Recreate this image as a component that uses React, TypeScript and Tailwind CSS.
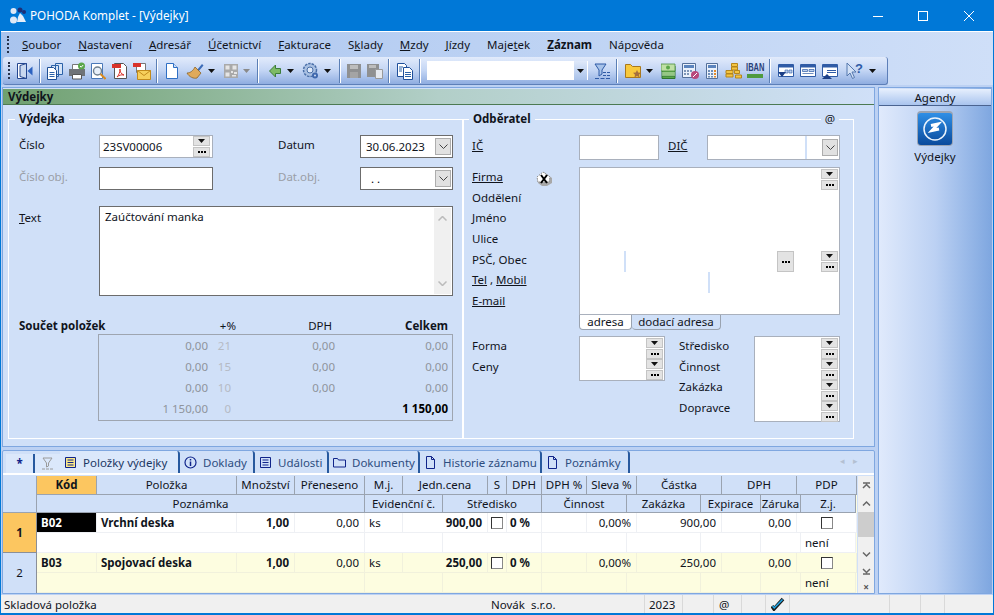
import type { ReactNode } from "react";

const font = "font-['Noto_Sans','Open_Sans',sans-serif]";

const Caret = ({ grey }: { grey?: boolean }) => (
  <svg width="7" height="4" viewBox="0 0 7 4" className="shrink-0">
    <path d="M0 0h7L3.5 4z" fill={grey ? "#8a8a8a" : "#111"} />
  </svg>
);

const Sep = ({ className = "" }: { className?: string }) => (
  <div className={`w-px h-[24px] bg-[#5b7fb5] border-r border-white shrink-0 box-content ${className}`} />
);

const Ico = ({ children, w = 18, className = "" }: { children: ReactNode; w?: number; className?: string }) => (
  <svg width={w} height="18" viewBox={`0 0 ${w} 18`} className={`shrink-0 ${className}`}>
    {children}
  </svg>
);

// toolbar drawings
const DoorIcon = () => (
  <Ico w={17}>
    <path d="M1.500 1.500h9v15h-9z" fill="#fff" stroke="#24468f" />
    <path d="M4 3.500l6.500-2v15L4 14.500z" fill="#c9d8ef" stroke="#24468f" />
    <path d="M16.500 4.500v9L11.500 9z" fill="#2c62c0" />
  </Ico>
);
const CopiesIcon = () => (
  <Ico>
    <path d="M9.500 1.500h7v11h-7zM5.500 3.500h7v11h-7z" fill="#d6e4f7" stroke="#2c62a8" />
    <path d="M1.500 5.500h6l3 3v9h-9z" fill="#fff" stroke="#1f4f96" />
    <path d="M3.500 10.500h5M3.500 12.500h5M3.500 14.500h5" stroke="#2c62a8" />
  </Ico>
);
const PrintIcon = () => (
  <Ico>
    <path d="M4.500 2.500h9v6h-9z" fill="#fff" stroke="#777" />
    <path d="M1 7h16v7H1z" fill="#6f7378" />
    <path d="M4.500 12.500h9v4.500h-9z" fill="#fff" stroke="#555" />
    <circle cx="13.500" cy="4" r="3.500" fill="#5aa74a" />
    <path d="M12 4l1.200 1.200 2-2.200" stroke="#fff" fill="none" />
  </Ico>
);
const PreviewIcon = () => (
  <Ico w={16}>
    <path d="M1.500 1.500h11v15h-11z" fill="#fff" stroke="#4a78b8" />
    <circle cx="7.500" cy="9" r="4" fill="#e8f0fa" stroke="#708090" strokeWidth="1.400" />
    <path d="M10.500 12l5 5" stroke="#d98a1e" strokeWidth="2" />
  </Ico>
);
const PdfIcon = () => (
  <Ico w={16}>
    <path d="M3.500 1.500h9l3 3v12h-12z" fill="#fff" stroke="#555" />
    <path d="M1 2h9v4H1z" fill="#d9322a" />
    <path d="M6 15c2-2 3-5 3-8 0 3 1 5 4 6-3-.5-5 .2-7 2z" fill="none" stroke="#d9322a" />
  </Ico>
);
const PdfMailIcon = () => (
  <Ico>
    <path d="M3.500 1.500h9v9h-9z" fill="#fff" stroke="#777" />
    <path d="M0 1h8v4H0z" fill="#d9322a" />
    <path d="M4.500 8.500h13v9h-13z" fill="#f6cf5c" stroke="#c28a1c" />
    <path d="M4.500 8.500l6.500 5 6.500-5" fill="none" stroke="#c28a1c" />
  </Ico>
);
const NewDocIcon = () => (
  <Ico w={12}>
    <path d="M.5 1.500h7l4 4v11H.5z" fill="#fff" stroke="#2f6fc4" />
    <path d="M7.500 1.500v4h4" fill="#cfe0f7" stroke="#2f6fc4" />
  </Ico>
);
const BroomIcon = () => (
  <Ico>
    <path d="M11 8l5-6 1.500 1.500-5 6z" fill="#3c6cb8" />
    <path d="M9 5l6 6-4 5C8 17 3 15 1 11c3 0 6-2 8-6z" fill="#e0aa5a" stroke="#8c6428" strokeWidth=".8" />
  </Ico>
);
const QrIcon = () => (
  <Ico w={14}>
    <path d="M0 2h14v14H0z" fill="#a9a9a9" />
    <path d="M1.500 3.500h4v4h-4zM8.500 3.500h4v4h-4zM1.500 10.500h4v4h-4zM7 9h2v2H7zM10 10h3v2h-3zM8 13h4v1.500H8z" fill="#e5e5e5" />
  </Ico>
);
const BackIcon = () => (
  <Ico w={12}>
    <path d="M.5 9l6-6v3.500h5v5h-5V15z" fill="#7dbb66" stroke="#3c7d3b" />
  </Ico>
);
const GearIcon = () => (
  <Ico>
    <circle cx="8" cy="8" r="6.500" fill="#a9c0e2" stroke="#4a6fa8" strokeWidth="1.500" strokeDasharray="2.500 1" />
    <circle cx="8" cy="8" r="3" fill="#dfe9f8" stroke="#4a6fa8" />
    <circle cx="13" cy="13.500" r="3" fill="#3f68ad" />
    <circle cx="13" cy="13.500" r="1" fill="#cfdcf2" />
  </Ico>
);
const SaveIcon = () => (
  <Ico w={14}>
    <path d="M0 2h14v14H0z" fill="#8f9091" />
    <path d="M3 3h8v4H3z" fill="#bdbdbd" />
    <path d="M3 10h8v6H3z" fill="#a4a4a4" />
  </Ico>
);
const SaveAllIcon = () => (
  <Ico w={16}>
    <path d="M0 2h12v13H0z" fill="#8f9091" />
    <path d="M8.500 7.500h7v9h-7z" fill="#e6e9ef" stroke="#9a9a9a" />
    <path d="M2 3h7v3H2z" fill="#bdbdbd" />
  </Ico>
);
const CopyIcon = () => (
  <Ico w={16}>
    <path d="M.5 1.500h7l2 2v11h-9z" fill="#fff" stroke="#1f4f9a" />
    <path d="M6.500 5.500h6l3 3v9h-9z" fill="#fff" stroke="#1f4f9a" />
    <path d="M8 10.500h6M8 12.500h6M8 14.500h6M2 5h4M2 7h3M2 9h3" stroke="#2c62a8" />
  </Ico>
);
const FilterIcon = () => (
  <Ico w={17}>
    <path d="M1 2h11L8 8v4l-3 2V8z" fill="#a7c3ea" stroke="#2f5ba6" />
    <path d="M1 16.500h4M6.500 16.500h4M12 16.500h4M9 13.500h3M13 13.500h3M9 10.500h3M13 10.500h3" stroke="#2f5ba6" />
  </Ico>
);
const FolderStarIcon = () => (
  <Ico w={16}>
    <path d="M.5 2.500h5l2 2h8v11H.5z" fill="#f8c93c" stroke="#a9781c" />
    <path d="M12 8l1.200 2.500 2.800.3-2 2 .6 2.700-2.600-1.400-2.600 1.400.6-2.700-2-2 2.800-.3z" fill="#a66f3c" />
  </Ico>
);
const MoneyIcon = () => (
  <Ico w={15}>
    <path d="M1 4h13v10H1zM1 14v2.500h13V14" fill="#5aa74a" stroke="#2f7430" />
    <path d="M0 2h14v7H0z" fill="#bfe0a5" stroke="#4b8f3f" strokeWidth=".8" />
    <circle cx="7" cy="5.500" r="2" fill="#5aa74a" />
    <path d="M1 11h13M1 13h13" stroke="#cfe8bf" />
  </Ico>
);
const CalcPctIcon = () => (
  <Ico w={17}>
    <path d="M.5 1.500h13v14H.5z" fill="#eaf1fb" stroke="#54709a" />
    <path d="M2 3h10v3H2z" fill="#5b84bd" />
    <path d="M2 8h2v2H2zM5 8h2v2H5zM8 8h2v2H8zM2 11h2v2H2zM5 11h2v2H5z" fill="#7d96b8" />
    <circle cx="13" cy="13" r="4" fill="#b8487c" />
    <path d="M11 15l4-4" stroke="#fff" />
  </Ico>
);
const CalcIcon = () => (
  <Ico w={12}>
    <path d="M.5 1.500h11v15H.5z" fill="#eaf1fb" stroke="#54709a" />
    <path d="M2 3h8v3H2z" fill="#5b84bd" />
    <path d="M2 8h2v2H2zM5 8h2v2H5zM2 11h2v2H2zM5 11h2v2H5zM2 14h2v1.500H2zM5 14h2v1.500H5z" fill="#6e8db8" />
    <path d="M8 8h2v2H8zM8 11h2v2H8zM8 14h2v1.500H8z" fill="#e28a2c" />
  </Ico>
);
const CoinsIcon = () => (
  <Ico w={17}>
    <path d="M6.500 1.500h6v3h-6zM6.500 5h6v3h-6zM1 8.500h7v3H1zM1 12h7v3H1zM9.500 8.500h5v3h-5zM10.500 13h6v3h-6z" fill="#f4c542" stroke="#b5851b" />
  </Ico>
);
const PanelIcon = ({ variant }: { variant: "down" | "plain" | "up" }) => (
  <Ico w={16}>
    <path d="M.5 2.500h15v12H.5z" fill="#fff" stroke="#2f5ba6" />
    <path d="M1 3h14v2.500H1z" fill="#2f5ba6" />
    {variant === "down" && (
      <>
        <path d="M7 8h3v3H7zM11 8h3v3h-3z" fill="#bcd0ee" stroke="#2f5ba6" strokeWidth=".6" />
        <path d="M0 10h8l-4 5z" fill="#1c3f86" />
      </>
    )}
    {variant === "plain" && <path d="M2.500 7.500h5v2h-5zM9 7.500h5v2H9zM2.500 11.500h11" fill="#bcd0ee" stroke="#2f5ba6" strokeWidth=".7" />}
    {variant === "up" && (
      <>
        <path d="M5 8.500h9M5 10.500h9" stroke="#2f5ba6" />
        <path d="M0 17h10l-5-5z" fill="#1c3f86" />
      </>
    )}
  </Ico>
);
const HelpIcon = () => (
  <div className="relative w-[18px] h-[18px] shrink-0">
    <svg width="12" height="18" viewBox="0 0 12 18">
      <path d="M1 1v13l3-3 2.500 5.500 2-1L6 10h4z" fill="#d3e1f6" stroke="#5578ae" />
    </svg>
    <span className="absolute left-[9px] top-0 text-[13px] leading-[14px] font-bold text-[#2f5ba6] font-['Liberation_Sans',sans-serif]">?</span>
  </div>
);

const Grip = () => <div className="w-[2px] h-[17px] border-l-2 border-dotted border-[#26324a] shrink-0" />;

const Menu = ({ children, bold }: { children: ReactNode; bold?: boolean }) => (
  <span className={bold ? "font-bold" : ""}>{children}</span>
);

const MenuBar = () => (
  <div className="h-[25px] flex items-center pl-[6px] text-[#10141c] bg-gradient-to-r from-[#a9c4ee] to-[#cfdff8]">
    <Grip />
    <div className="ml-[13px] flex gap-[17px]">
      <Menu><u>S</u>oubor</Menu>
      <Menu><u>N</u>astavení</Menu>
      <Menu><u>A</u>dresář</Menu>
      <Menu><u>Ú</u>četnictví</Menu>
      <Menu><u>F</u>akturace</Menu>
      <Menu>S<u>k</u>lady</Menu>
      <Menu><u>M</u>zdy</Menu>
      <Menu><u>J</u>ízdy</Menu>
      <Menu>Maje<u>t</u>ek</Menu>
      <Menu bold><u>Z</u>áznam</Menu>
      <Menu>Náp<u>o</u>věda</Menu>
    </div>
  </div>
);

const ToolBar = () => (
  <div className="flex bg-gradient-to-r from-[#a9c4ee] to-[#cfdff8] pl-[2px]">
    <div className="w-[885px] h-[28px] flex items-center pl-[5px] rounded-[3px] bg-gradient-to-b from-[#e2ebfb] via-[#c3d5f4] to-[#8fade0] border-r border-b border-[#5d7fb8]">
      <Grip />
      <div className="ml-[6px]"><DoorIcon /></div>
      <Sep className="ml-[6px]" />
      <div className="ml-[5px]"><CopiesIcon /></div>
      <div className="ml-[4px]"><PrintIcon /></div>
      <div className="ml-[4px]"><PreviewIcon /></div>
      <div className="ml-[5px]"><PdfIcon /></div>
      <div className="ml-[6px]"><PdfMailIcon /></div>
      <Sep className="ml-[5px]" />
      <div className="ml-[8px]"><NewDocIcon /></div>
      <div className="ml-[8px]"><BroomIcon /></div>
      <div className="ml-[4px]"><Caret /></div>
      <div className="ml-[9px]"><QrIcon /></div>
      <div className="ml-[5px]"><Caret grey /></div>
      <Sep className="ml-[7px]" />
      <div className="ml-[10px]"><BackIcon /></div>
      <div className="ml-[6px]"><Caret /></div>
      <div className="ml-[8px]"><GearIcon /></div>
      <div className="ml-[4px]"><Caret /></div>
      <Sep className="ml-[8px]" />
      <div className="ml-[6px]"><SaveIcon /></div>
      <div className="ml-[6px]"><SaveAllIcon /></div>
      <Sep className="ml-[5px]" />
      <div className="ml-[7px]"><CopyIcon /></div>
      <Sep className="ml-[6px]" />
      <div className="ml-[6px] w-[161px] h-[19px] bg-white flex justify-end border-r border-[#fff]">
        <div className="w-[13px] h-full bg-gradient-to-b from-[#dfe9fa] to-[#a9c2ea] flex items-center justify-center">
          <Caret />
        </div>
      </div>
      <div className="ml-[6px]"><FilterIcon /></div>
      <Sep className="ml-[5px]" />
      <div className="ml-[7px]"><FolderStarIcon /></div>
      <div className="ml-[5px]"><Caret /></div>
      <div className="ml-[8px]"><MoneyIcon /></div>
      <div className="ml-[6px]"><CalcPctIcon /></div>
      <div className="ml-[7px]"><CalcIcon /></div>
      <div className="ml-[7px]"><CoinsIcon /></div>
      <div className="ml-[4px] w-[18px] flex flex-col items-center">
        <span className="scale-x-75 text-[10px] font-bold text-[#2a3f78] leading-[10px] whitespace-nowrap font-['Liberation_Sans',sans-serif]">IBAN</span>
        <span className="w-[16px] h-[4px] mt-[1px] bg-[#4f9a3f]" />
      </div>
      <Sep className="ml-[5px]" />
      <div className="ml-[7px]"><PanelIcon variant="down" /></div>
      <div className="ml-[6px]"><PanelIcon variant="plain" /></div>
      <div className="ml-[6px]"><PanelIcon variant="up" /></div>
      <div className="ml-[8px]"><HelpIcon /></div>
      <div className="ml-[5px]"><Caret /></div>
    </div>
  </div>
);

// little grey buttons used by all the lookup fields
const DropBtn = ({ w = "w-[17px]" }: { w?: string }) => (
  <div className={`${w} h-[10px] bg-[#e3e3e3] border border-[#c4c4c4] flex items-center justify-center`}>
    <Caret />
  </div>
);
const DotsBtn = ({ w = "w-[17px]", h = "h-[10px]" }: { w?: string; h?: string }) => (
  <div className={`${w} ${h} bg-[#e3e3e3] border border-[#c4c4c4] flex items-center justify-center`}>
    <span className="w-[8px] border-t-2 border-dotted border-black" />
  </div>
);
const LookupBtns = () => (
  <div className="flex flex-col gap-px">
    <DropBtn />
    <DotsBtn />
  </div>
);
const ChevBtn = () => (
  <div className="w-[16px] h-[17px] bg-[#e1e1e1] border border-[#adadad] flex items-center justify-center">
    <svg width="9" height="5" viewBox="0 0 9 5"><path d="M.5.5l4 4 4-4" fill="none" stroke="#444" /></svg>
  </div>
);

const Label = ({ children, className = "" }: { children: ReactNode; className?: string }) => (
  <div className={`h-[20.67px] leading-[20px] ${className}`}>{children}</div>
);

const Vydejka = () => (
  <fieldset className="w-[455px] h-[328px] border border-white pl-[10px] pr-[8px]">
    <legend className="ml-[-4px] px-[4px] font-bold leading-[16px]">Výdejka</legend>
    <div className="flex mt-[8px] items-center h-[23px]">
      <div className="w-[80px] mt-[-3px]">Číslo</div>
      <div className="w-[114px] h-[23px] bg-white border border-[#a9b0bc] flex items-center justify-between pl-[3px] pr-[2px]">
        23SV00006
        <LookupBtns />
      </div>
      <div className="ml-[65px] w-[82px] mt-[-3px]">Datum</div>
      <div className="w-[93px] h-[23px] bg-white border border-[#6c6c6c] flex items-center justify-between pl-[5px] pr-[1px]">
        30.06.2023
        <ChevBtn />
      </div>
    </div>
    <div className="flex mt-[9px] items-center h-[23px] text-[#9a9ea6]">
      <div className="w-[80px] mt-[-3px]">Číslo obj.</div>
      <div className="w-[114px] h-[23px] bg-white border border-[#6c6c6c]" />
      <div className="ml-[65px] w-[82px] mt-[-3px]">Dat.obj.</div>
      <div className="w-[93px] h-[23px] bg-white border border-[#6c6c6c] flex items-center justify-between pl-[10px] pr-[1px] text-black">
        . .
        <ChevBtn />
      </div>
    </div>
    <div className="flex mt-[16px]">
      <div className="w-[80px] pt-[3px]"><u>T</u>ext</div>
      <div className="w-[354px] h-[90px] bg-white border border-[#6c6c6c] flex justify-between">
        <span className="pl-[5px] pt-[1px]">Zaúčtování manka</span>
        <div className="w-[17px] bg-[#f0f0f0] flex flex-col justify-between items-center py-[8px] mr-[1px] my-px">
          <svg width="9" height="5" viewBox="0 0 9 5"><path d="M.5 4.500l4-4 4 4" fill="none" stroke="#bbb" strokeWidth="1.500" /></svg>
          <svg width="9" height="5" viewBox="0 0 9 5"><path d="M.5.5l4 4 4-4" fill="none" stroke="#bbb" strokeWidth="1.500" /></svg>
        </div>
      </div>
    </div>
    <div className="flex mt-[21px] h-[17px] items-center">
      <div className="w-[99px] font-bold">Součet položek</div>
      <div className="w-[118px] text-right">+%</div>
      <div className="w-[96px] text-right">DPH</div>
      <div className="w-[116px] text-right font-bold">Celkem</div>
    </div>
    <div className="ml-[79px] w-[355px] h-[87px] border border-[#9ea5b0] text-[#8f949c] pr-[4px]">
      {[["0,00", "21", "0,00", "0,00"], ["0,00", "15", "0,00", "0,00"], ["0,00", "10", "0,00", "0,00"], ["1 150,00", "0", "", "1 150,00"]].map((r, i) => (
        <div key={i} className="flex h-[21px] items-center">
          <div className="w-[109px] text-right">{r[0]}</div>
          <div className="w-[25px] text-right pr-[2px] text-[#b5bac4]">{r[1]}</div>
          <div className="w-[102px] text-right">{r[2]}</div>
          <div className={`flex-1 text-right ${i === 3 ? "font-bold text-black" : ""}`}>{r[3]}</div>
        </div>
      ))}
    </div>
  </fieldset>
);

const HouseX = () => (
  <svg width="17" height="17" viewBox="0 0 17 17" className="ml-[33px] mt-[3px] shrink-0">
    <path d="M1 8l7-6 8 6v5l-5 3H6l-4-3z" fill="#a8a8a8" />
    <path d="M1 7l6-5 7 5-1 5H2z" fill="#fff" stroke="#8a8a8a" strokeDasharray="1.500 1" />
    <path d="M5 5l6 8M11 5l-6 8" stroke="#000" strokeWidth="2" />
  </svg>
);

const Odberatel = () => (
  <fieldset className="relative w-[391px] h-[328px] border border-white pl-[8px]">
    <legend className="ml-[-3px] px-[4px] font-bold leading-[16px]">Odběratel</legend>
    <span className="absolute right-[14px] top-[-16px] px-[4px] bg-[#d0e0f8] leading-[16px]">@</span>
    <div className="flex mt-[8px] items-center h-[25px]">
      <div className="w-[107px] mt-[-3px]"><u>IČ</u></div>
      <div className="w-[80px] h-[25px] bg-white border border-[#a9b0bc]" />
      <div className="w-[48px] ml-[9px] mt-[-3px]"><u>DIČ</u></div>
      <div className="ml-[-9px] w-[133px] h-[25px] border border-[#a9b0bc] bg-white flex justify-end items-center pr-px">
        <div className="w-[2px] h-full bg-[#d0e0f8] mr-[15px]" />
        <ChevBtn />
      </div>
    </div>
    <div className="flex mt-[7px]">
      <div className="w-[107px]">
        <div className="flex h-[20.67px] leading-[20px]"><u>Firma</u><HouseX /></div>
        <Label>Oddělení</Label>
        <Label>Jméno</Label>
        <Label>Ulice</Label>
        <Label>PSČ, Obec</Label>
        <Label><u>Tel</u> , <u>Mobil</u></Label>
        <Label><u>E-mail</u></Label>
      </div>
      <div className="relative w-[261px] h-[148px] bg-white border border-[#a9b0bc]">
        <div className="absolute right-[1px] top-[1px]"><LookupBtns /></div>
        <div className="absolute right-[1px] top-[83px]"><LookupBtns /></div>
        <div className="absolute left-[197px] top-[83px]"><DotsBtn h="h-[21px]" /></div>
        <div className="absolute left-[44px] top-[83px] w-[2px] h-[21px] bg-[#d0e0f8]" />
        <div className="absolute left-[128px] top-[104px] w-[2px] h-[21px] bg-[#d0e0f8]" />
      </div>
    </div>
    <div className="flex ml-[107px] h-[15px] leading-[14px]">
      <div className="w-[53px] bg-white border-x border-b border-[#9aa3b0] rounded-b-[4px] text-center">adresa</div>
      <div className="w-[89px] bg-[#d0e0f8] border-r border-b border-[#9aa3b0] rounded-b-[4px] text-center">dodací adresa</div>
    </div>
    <div className="flex mt-[6px]">
      <div className="w-[107px]">
        <Label>Forma</Label>
        <Label>Ceny</Label>
      </div>
      <div className="w-[86px] h-[45px] bg-white border border-[#a9b0bc] flex justify-end pr-px pt-px">
        <div className="flex flex-col"><LookupBtns /><LookupBtns /></div>
      </div>
      <div className="w-[89px] ml-[14px] mr-[-14px]">
        <Label>Středisko</Label>
        <Label>Činnost</Label>
        <Label>Zakázka</Label>
        <Label>Dopravce</Label>
      </div>
      <div className="w-[86px] h-[86px] bg-white border border-[#a9b0bc] flex justify-end pr-px pt-px">
        <div className="flex flex-col"><LookupBtns /><LookupBtns /><LookupBtns /><LookupBtns /></div>
      </div>
    </div>
  </fieldset>
);

const TabItem = ({ icon, label, active, w }: { icon: ReactNode; label: string; active?: boolean; w: string }) => (
  <div className={`${w} h-[22px] pt-px flex items-center gap-[6px] pl-[4px] border-r-2 border-[#27599e] rounded-tr-[3px] whitespace-nowrap ${active ? "bg-[#dbe8fb] text-[#1b3763]" : "text-[#2d4d80]"}`}>
    {icon}
    {label}
  </div>
);

const tabStroke = "#10248a";
const TabIcon = ({ kind }: { kind: "list" | "yellow" | "info" | "folder" | "doc" }) => (
  <svg width="13" height="13" viewBox="0 0 13 13" className="shrink-0">
    {kind === "info" && (
      <>
        <circle cx="6.500" cy="6.500" r="5.500" fill="none" stroke={tabStroke} strokeWidth="1.200" />
        <path d="M6.500 3v1.500M6.500 5.500V10" stroke={tabStroke} strokeWidth="1.500" />
      </>
    )}
    {(kind === "list" || kind === "yellow") && (
      <>
        <path d="M1.500 1.500h10v10h-10z" fill={kind === "yellow" ? "#fbe98a" : "none"} stroke={tabStroke} />
        <path d="M3.500 4h6M3.500 6.500h6M3.500 9h6" stroke={tabStroke} />
      </>
    )}
    {kind === "folder" && <path d="M.5 2.500h4l1 1.500h7v7H.5z" fill="none" stroke={tabStroke} />}
    {kind === "doc" && <path d="M2.500.5h5l3 3v9h-8zM7.500.5v3h3" fill="none" stroke={tabStroke} />}
  </svg>
);

const topCols = "grid-cols-[60px_140px_58px_70px_38px_85px_19px_35px_45px_50px_85px_75px_60px]";
const botCols = "grid-cols-[328px_78px_99px_85px_74px_60px_40px_55px]";

const Head = ({ children, active, h = "h-[19px]" }: { children?: ReactNode; active?: boolean; h?: string }) => (
  <div className={`${h} leading-[18px] text-center border-r border-b border-[#9aa3b0] whitespace-nowrap overflow-hidden ${active ? "bg-[#fcc660] font-bold" : "bg-[#d0e0f8]"}`}>
    {children}
  </div>
);

const Cell = ({ children, right, bold, bg, center, tight }: { children?: ReactNode; right?: boolean; bold?: boolean; bg: string; center?: boolean; tight?: boolean }) => (
  <div className={`h-[20px] leading-[19px] border-r border-b ${bg} ${right ? "text-right" : ""} ${bold ? "font-bold" : ""} ${center ? "flex items-center justify-center" : tight ? "pl-[3px]" : "pl-[4px] pr-[5px]"} whitespace-nowrap overflow-hidden`}>
    {children}
  </div>
);

const Check = () => <span className="w-[12px] h-[12px] shrink-0 bg-white border border-t-[#333] border-l-[#333] border-r-[#888] border-b-[#888]" />;

const ItemRow = ({ kod, nazev, cena, castka, bg, kodBg }: { kod: string; nazev: string; cena: string; castka: string; bg: string; kodBg: string }) => (
  <>
    <div className={`grid ${topCols}`}>
      <Cell bg={kodBg} bold>{kod}</Cell>
      <Cell bg={bg} bold>{nazev}</Cell>
      <Cell bg={bg} bold right>1,00</Cell>
      <Cell bg={bg} right>0,00</Cell>
      <Cell bg={bg}>ks</Cell>
      <Cell bg={bg} bold right>{cena}</Cell>
      <Cell bg={bg} center><Check /></Cell>
      <Cell bg={bg} bold tight>0 %</Cell>
      <Cell bg={bg} />
      <Cell bg={bg} right>0,00%</Cell>
      <Cell bg={bg} right>{castka}</Cell>
      <Cell bg={bg} right>0,00</Cell>
      <Cell bg={bg} center><Check /></Cell>
    </div>
    <div className={`grid ${botCols}`}>
      <Cell bg={bg} />
      <Cell bg={bg} />
      <Cell bg={bg} />
      <Cell bg={bg} />
      <Cell bg={bg} />
      <Cell bg={bg} />
      <Cell bg={bg} />
      <Cell bg={bg}>není</Cell>
    </div>
  </>
);

const ScrollArrow = ({ d, cls = "" }: { d: string; cls?: string }) => (
  <svg width="9" height="9" viewBox="0 0 9 9" className={cls}>
    <path d={d} fill="none" stroke="#666" strokeWidth="1.500" />
  </svg>
);

const Grid = () => (
  <div className="flex mt-[1px]">
    <div className="w-[854px] bg-[#fdfde0]">
      <div className="flex">
        <div className="w-[34px] h-[37px] bg-[#d0e0f8] border-r border-b border-[#9aa3b0]" />
        <div className="flex-1">
          <div className={`grid ${topCols}`}>
            <Head active>Kód</Head>
            <Head>Položka</Head>
            <Head>Množství</Head>
            <Head>Přeneseno</Head>
            <Head>M.j.</Head>
            <Head>Jedn.cena</Head>
            <Head>S</Head>
            <Head>DPH</Head>
            <Head>DPH %</Head>
            <Head>Sleva %</Head>
            <Head>Částka</Head>
            <Head>DPH</Head>
            <Head>PDP</Head>
          </div>
          <div className={`grid ${botCols}`}>
            <Head h="h-[18px]">Poznámka</Head>
            <Head h="h-[18px]">Evidenční č.</Head>
            <Head h="h-[18px]">Středisko</Head>
            <Head h="h-[18px]">Činnost</Head>
            <Head h="h-[18px]">Zakázka</Head>
            <Head h="h-[18px]">Expirace</Head>
            <Head h="h-[18px]">Záruka</Head>
            <Head h="h-[18px]">Z.j.</Head>
          </div>
        </div>
      </div>
      <div className="flex">
        <div className="w-[34px] h-[40px] bg-[#fcc660] border-r border-b border-[#8a8f98] flex items-center justify-center font-bold">1</div>
        <div className="flex-1"><ItemRow kod="B02" nazev="Vrchní deska" cena="900,00" castka="900,00" bg="bg-white border-[#eef0f4]" kodBg="bg-black text-white border-[#eef0f4]" /></div>
      </div>
      <div className="flex">
        <div className="w-[34px] h-[40px] bg-[#d0e0f8] border-r border-[#8a8f98] flex items-center justify-center">2</div>
        <div className="flex-1"><ItemRow kod="B03" nazev="Spojovací deska" cena="250,00" castka="250,00" bg="bg-[#fdfde0] border-[#f1f1dc]" kodBg="bg-[#fdfde0] border-[#f1f1dc]" /></div>
      </div>
    </div>
    <div className="w-[18px] ml-[1px] flex flex-col items-center bg-[#f0f0f0]">
      <ScrollArrow d="M1 7l3.500-3.500L8 7M1 2h7" cls="mt-[5px]" />
      <ScrollArrow d="M1 6.500l3.500-3.500L8 6.500" cls="mt-[9px]" />
      <div className="w-full h-[25px] bg-[#cdcdcd] mt-[4px]" />
      <ScrollArrow d="M1 2.500l3.500 3.500L8 2.500" cls="mt-[13px]" />
      <ScrollArrow d="M1 2l3.500 3.500L8 2M1 7h7" cls="mt-[8px]" />
      <span className="mt-[6px] text-[10px] leading-[10px] font-bold text-[#555]">×</span>
    </div>
  </div>
);

const BottomTabs = () => (
  <div className="h-[144px] border border-[#7fa7e0] rounded-t-[2px] bg-[#d0e0f8] flex flex-col overflow-hidden">
    <div className="relative h-[24px] flex items-end pl-[3px] border-b-2 border-white shrink-0">
      <div className="w-[29px] h-[19px] flex items-center justify-center border-r-2 border-[#27599e] bg-[#dbe8fb] font-bold text-[#10248a]">*</div>
      <div className="w-[25px] h-[19px] flex items-center justify-center bg-[#dbe8fb]">
        <svg width="13" height="13" viewBox="0 0 13 13"><path d="M2 1h9L7.500 6v3L5.500 10V6zM1 12h3M5 12h3M9 12h3" fill="none" stroke="#9a9a9a" /></svg>
      </div>
      <TabItem w="w-[120px]" active icon={<TabIcon kind="yellow" />} label="Položky výdejky" />
      <TabItem w="w-[75px]" icon={<TabIcon kind="info" />} label="Doklady" />
      <TabItem w="w-[74px]" icon={<TabIcon kind="list" />} label="Události" />
      <TabItem w="w-[91px]" icon={<TabIcon kind="folder" />} label="Dokumenty" />
      <TabItem w="w-[122px]" icon={<TabIcon kind="doc" />} label="Historie záznamu" />
      <TabItem w="w-[88px]" icon={<TabIcon kind="doc" />} label="Poznámky" />
      <span className="absolute right-[8px] top-[5px] text-[9px] leading-[10px] text-[#b4c0d2] tracking-[8px]">◂▸</span>
    </div>
    <Grid />
  </div>
);

const StatusBar = () => (
  <div className="h-[18px] bg-[#f0f0f0] flex items-center text-[#10141c]">
    <div className="w-[490px] pl-[3px] pt-[2px]">Skladová položka</div>
    <div className="w-[153px] pt-[2px]">Novák&nbsp;&nbsp;s.r.o.</div>
    <div className="w-[39px] h-full border-l border-[#d9d9d9] pl-[4px] pt-[1px]">2023</div>
    <div className="w-[31px] h-full border-l border-[#d9d9d9] ml-[-1px]" />
    <div className="w-[28px] h-full border-l border-[#d9d9d9] pl-[5px] pt-[1px]">@</div>
    <div className="w-[24px] h-full border-l border-[#d9d9d9]" />
    <div className="w-[24px] h-full border-l border-[#d9d9d9] flex items-center justify-center">
      <svg width="14" height="14" viewBox="0 0 14 14"><path d="M1 9l2 3L12 2" fill="none" stroke="#1c1c1c" strokeWidth="3.500" /><path d="M1.500 9l1.700 2L11.500 2.500" fill="none" stroke="#23a9e8" strokeWidth="1.500" /></svg>
    </div>
    <div className="w-[100px] h-full border-l border-[#d9d9d9]" />
    <div className="w-[31px] h-full border-l border-[#d9d9d9]" />
    <div className="w-[24px] h-full border-l border-[#d9d9d9]" />
    <div className="flex-1 h-full border-l border-[#d9d9d9]" />
  </div>
);

export default function App() {
  return (
    <div className={`w-[994px] h-[615px] overflow-hidden bg-[#0078d7] px-px pb-[2px] flex flex-col text-[11.5px] text-[#10141c] ${font}`}>
      <div className="h-[31px] shrink-0 flex items-center text-white text-[11.7px] pl-[8px]">
        <svg width="18" height="18" viewBox="0 0 18 18">
          <circle cx="4.500" cy="4" r="3" fill="#dfe8f6" />
          <circle cx="11" cy="3" r="2.500" fill="#1c2f78" />
          <circle cx="4.500" cy="13" r="3.500" fill="#dfe8f6" />
          <path d="M11 6l3 3 3 6H8l1-5z" fill="#e6eefa" />
          <circle cx="15" cy="5" r="2" fill="#1c2f78" />
        </svg>
        <span className="ml-[3px]">POHODA Komplet - [Výdejky]</span>
        <svg width="102" height="12" viewBox="0 0 102 12" className="ml-auto mr-[18px]" shapeRendering="crispEdges">
          <path d="M0 6h10" stroke="#fff" />
          <path d="M45.500 1.500h9v9h-9z" fill="none" stroke="#fff" />
          <path d="M91 1l10 10M101 1L91 11" stroke="#fff" shapeRendering="auto" />
        </svg>
      </div>
      <div className="flex-1 flex flex-col bg-[#bcd1f3] border-t border-white min-h-0">
        <MenuBar />
        <ToolBar />
        <div className="flex flex-1 mt-[2px] min-h-0 pl-[1px]">
          <div className="w-[873px] flex flex-col gap-[3px]">
            <div className="h-[360px] border border-[#7fa7e0] bg-[#d0e0f8] pb-[1px]">
              <div className="h-[16px] mt-[1px] bg-gradient-to-r from-[#6fa06f] via-[#b2cfc8] to-[#d0e0f8] border-b border-[#4c7a52] pl-[5px] font-bold leading-[16px]">Výdejky</div>
              <div className="flex pl-[5px] mt-[6px]">
                <Vydejka />
                <Odberatel />
              </div>
            </div>
            <BottomTabs />
          </div>
          <div className="w-[114px] ml-[3px] mr-px h-[507px] border border-[#7fa7e0] flex flex-col bg-gradient-to-r from-[#e0eafc] via-[#bcd1f3] to-[#7fa7e0]">
            <div className="h-[17px] mt-px border-b border-[#4a6390] bg-gradient-to-b from-[#e6effd] to-[#a9c4ee] text-center leading-[17px]">Agendy</div>
            <div className="flex flex-col items-center mt-[5px]">
              <div className="w-[36px] h-[35px] rounded-[4px] bg-gradient-to-b from-[#2f8fe6] to-[#0a4a9c] border-t-2 border-x border-b border-[#9aa4b4] flex items-center justify-center">
                <svg width="26" height="26" viewBox="0 0 26 26">
                  <circle cx="13" cy="13" r="11" fill="none" stroke="#eaf3fc" strokeWidth="1.500" />
                  <path d="M9 9.500l7-1.500-6 6.500 7-1.500" fill="none" stroke="#fff" strokeWidth="3" />
                </svg>
              </div>
              <span className="mt-[2px]">Výdejky</span>
            </div>
          </div>
        </div>
        <StatusBar />
      </div>
    </div>
  );
}
